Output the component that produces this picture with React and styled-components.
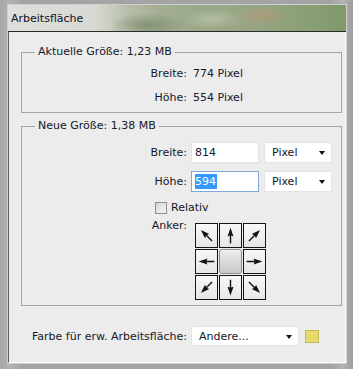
import React from "react";
import styled, { createGlobalStyle } from "styled-components";

const GlobalStyle = createGlobalStyle`
  html, body {
    margin: 0;
    padding: 0;
  }
  body {
    background: #a4a4a4;
    font-family: "DejaVu Sans", Tahoma, sans-serif;
    font-size: 11px;
    color: #16162a;
  }
`;

const Frame = styled.div`
  width: 353px;
  height: 369px;
  box-sizing: border-box;
  padding: 5px 7px 6px 8px;
  background: linear-gradient(90deg, #a8a8a8, #b2b2b2 3%, #a4a4a4 6%, #a4a4a4 94%, #b4b4b4 97%, #9c9c9c);
  display: flex;
`;

const Window = styled.div`
  flex: 1;
  display: flex;
  flex-direction: column;
  box-shadow: 0 0 0 1px #cfcfcf;
`;

const TitleBar = styled.div`
  height: 26px;
  flex-shrink: 0;
  display: flex;
  align-items: center;
  padding-left: 3px;
  border-bottom: 1px solid #2a2a2a;
  color: #10102a;
  background:
    radial-gradient(ellipse 38px 12px at 140px 20px, rgba(110, 128, 96, 0.65), transparent),
    radial-gradient(ellipse 26px 9px at 255px 10px, rgba(190, 150, 112, 0.55), transparent),
    radial-gradient(ellipse 30px 10px at 205px 14px, rgba(196, 204, 180, 0.6), transparent),
    linear-gradient(90deg, #dedfda 0%, #d8d9d2 26%, #b4bca6 36%, #a2ad92 46%, #9aa888 58%, #98a584 72%, #8ca078 86%, #7e9a6a 100%);
`;

const Panel = styled.div`
  flex: 1;
  display: flex;
  flex-direction: column;
  background: #ececec;
  border-left: 1px solid #5e5e5e;
  border-right: 1px solid #fbfbfb;
  border-bottom: 1px solid #fbfbfb;
  padding: 13px 3px 0 12px;
`;

const Group = styled.fieldset`
  margin: ${p => (p.$first ? "0" : "6px 0 0")};
  padding: 0;
  border: 1px solid #a3a3a3;
  min-width: 0;
`;

const Legend = styled.legend`
  margin-left: 13px;
  padding: 0 3px;
  line-height: 14px;
`;

const InfoBody = styled.div`
  padding: 2px 0 3px;
`;

const InfoRow = styled.div`
  display: grid;
  grid-template-columns: 165px auto;
  column-gap: 6px;
  align-items: center;
  height: 24px;
`;

const Label = styled.span`
  text-align: right;
  white-space: nowrap;
`;

const FormBody = styled.div`
  display: flex;
  flex-direction: column;
  padding: 9px 0 5px;
`;

const FormRow = styled.div`
  display: grid;
  grid-template-columns: 165px 68px 68px;
  column-gap: 4px;
  align-items: center;
  margin-top: ${p => p.$top || 0}px;

  & > :last-child {
    margin-left: 1px;
  }
`;

const Field = styled.div`
  height: 21px;
  box-sizing: border-box;
  display: flex;
  align-items: center;
  padding: 0 3px;
  background: #fff;
  border: 1px solid ${p => (p.$focused ? "#7ea8d8" : "#e2e2e2")};
`;

const Selected = styled.span`
  background: #3399ff;
  color: #fff;
  line-height: 15px;
  padding: 0 1px 0 0;
`;

const Select = styled.div`
  width: ${p => p.$width || 68}px;
  height: ${p => p.$height || 21}px;
  box-sizing: border-box;
  display: flex;
  align-items: center;
  justify-content: space-between;
  padding: 0 6px 0 7px;
  background: #fff;
  border: 1px solid #e4e4e4;
  border-radius: 2px;
`;

const Caret = styled.span`
  width: 0;
  height: 0;
  border-left: 3.5px solid transparent;
  border-right: 3.5px solid transparent;
  border-top: 4px solid #111;
  margin-top: 1px;
`;

const CheckRow = styled.label`
  display: flex;
  align-items: center;
  gap: 4px;
  padding-left: 133px;
  margin-top: 9px;
  line-height: 14px;
`;

const CheckBox = styled.span`
  width: 12px;
  height: 12px;
  box-sizing: border-box;
  border: 1px solid #8e8f8f;
  background: linear-gradient(135deg, #d6d6d6, #f6f6f6);
`;

const AnchorRow = styled.div`
  display: grid;
  grid-template-columns: 165px auto;
  column-gap: 8px;
  align-items: start;
  margin-top: 4px;
  line-height: 14px;
`;

const AnchorGrid = styled.div`
  margin-top: 4px;
  display: grid;
  grid-template-columns: repeat(3, 23px);
  grid-template-rows: repeat(3, 25px);
  gap: 1px;
`;

const Cell = styled.div`
  box-sizing: border-box;
  display: flex;
  align-items: center;
  justify-content: center;
  border: 1px solid #151515;
  background: linear-gradient(#f8f8f8, #e6e6e6);
`;

const CenterCell = styled.div`
  box-sizing: border-box;
  border: 1px solid #8e8e8e;
  border-radius: 3px;
  background: linear-gradient(#ececec, #c9c9c9);
  box-shadow: inset 0 1px 0 #f6f6f6;
`;

const BottomRow = styled.div`
  display: grid;
  grid-template-columns: 157px 108px 14px;
  column-gap: 4px;
  align-items: center;
  margin: 20px 0 0 9px;

  & > :last-child {
    margin-left: 2px;
  }
`;

const Swatch = styled.span`
  width: 14px;
  height: 13px;
  box-sizing: border-box;
  background: #e6dc6c;
  border: 1px solid #c2b857;
`;

const Arrow = ({ angle }) => (
  <svg width="22" height="23" viewBox="0 0 24 24">
    <g transform={`rotate(${angle} 12 12)`}>
      <path
        d="M12 3 L15.4 13 L12.8 12 L12.8 21 L11.2 21 L11.2 12 L8.6 13 Z"
        fill="#121212"
      />
    </g>
  </svg>
);

const anchors = [-45, 0, 45, -90, null, 90, -135, 180, 135];

export default function App() {
  return (
    <>
      <GlobalStyle />
      <Frame>
        <Window>
          <TitleBar>Arbeitsfläche</TitleBar>
          <Panel>
            <Group $first>
              <Legend>Aktuelle Größe: 1,23 MB</Legend>
              <InfoBody>
                <InfoRow>
                  <Label>Breite:</Label>
                  <span>774 Pixel</span>
                </InfoRow>
                <InfoRow>
                  <Label>Höhe:</Label>
                  <span>554 Pixel</span>
                </InfoRow>
              </InfoBody>
            </Group>

            <Group>
              <Legend>Neue Größe: 1,38 MB</Legend>
              <FormBody>
                <FormRow>
                  <Label>Breite:</Label>
                  <Field>814</Field>
                  <Select>
                    Pixel
                    <Caret />
                  </Select>
                </FormRow>
                <FormRow $top={8}>
                  <Label>Höhe:</Label>
                  <Field $focused>
                    <Selected>594</Selected>
                  </Field>
                  <Select>
                    Pixel
                    <Caret />
                  </Select>
                </FormRow>
                <CheckRow>
                  <CheckBox />
                  Relativ
                </CheckRow>
                <AnchorRow>
                  <Label>Anker:</Label>
                  <AnchorGrid>
                    {anchors.map((a, i) =>
                      a === null ? (
                        <CenterCell key={i} />
                      ) : (
                        <Cell key={i}>
                          <Arrow angle={a} />
                        </Cell>
                      )
                    )}
                  </AnchorGrid>
                </AnchorRow>
              </FormBody>
            </Group>

            <BottomRow>
              <Label>Farbe für erw. Arbeitsfläche:</Label>
              <Select $width={108} $height={20}>
                Andere...
                <Caret />
              </Select>
              <Swatch />
            </BottomRow>
          </Panel>
        </Window>
      </Frame>
    </>
  );
}
